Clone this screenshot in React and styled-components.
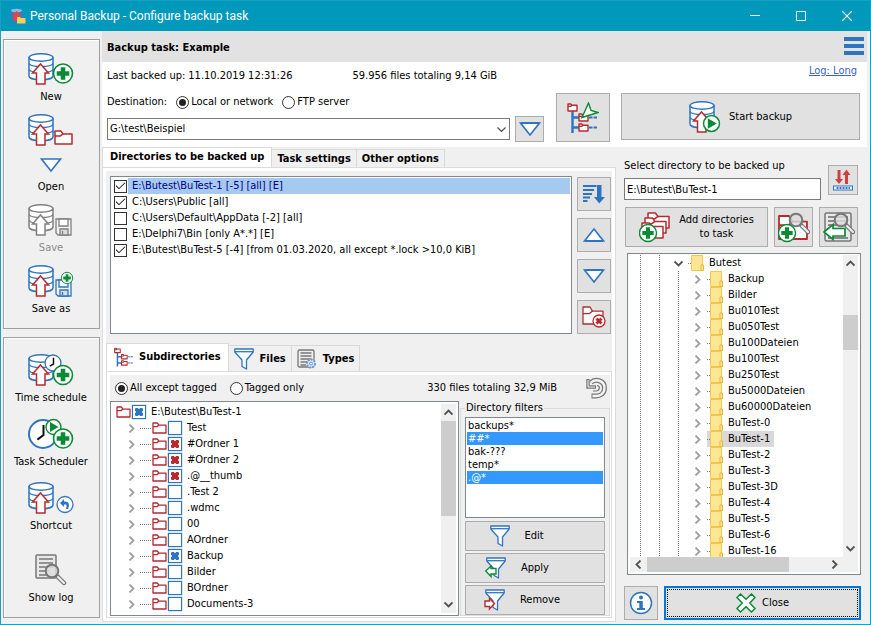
import React from "react";
import styled, { createGlobalStyle } from "styled-components";

const BLUE = "#2e74c0";
const RED = "#b52b2f";
const GREEN = "#0b8a35";
const GREY = "#808080";

const GlobalStyle = createGlobalStyle`
  * {
    box-sizing: border-box;
  }
  body {
    margin: 0;
    background: #f0f0f0;
    color: #000;
    font-family: "DejaVu Sans Condensed", "Noto Sans", sans-serif;
    font-size: 11px;
    line-height: 14px;
  }
  button, input, select {
    font: inherit;
    color: inherit;
    margin: 0;
  }
  svg {
    display: block;
    flex: none;
  }
`;

const Window = styled.div`
  display: flex;
  flex-direction: column;
  height: 100vh;
  min-height: 560px;
  border: 1px solid #18a0bf;
  background: #f0f0f0;
  white-space: nowrap;
`;

const TitleBar = styled.header`
  display: flex;
  align-items: center;
  flex: none;
  height: 30px;
  padding-left: 9px;
  background: #0099bc;
  color: #fff;
  font-family: Roboto, "Open Sans", sans-serif;

  h1 {
    flex: 1;
    margin: 0 0 0 4px;
    font-size: 12px;
    font-weight: 400;
  }
`;

const WindowButton = styled.button`
  display: grid;
  place-items: center;
  width: 46px;
  height: 30px;
  padding: 0;
  border: 0;
  background: none;
`;

const Body = styled.div`
  display: flex;
  flex: 1;
  min-height: 0;
`;

const Sidebar = styled.nav`
  display: flex;
  flex-direction: column;
  gap: 8px;
  flex: none;
  width: 101px;
  padding: 8px 2px 7px;
`;

const ToolPanel = styled.div`
  display: flex;
  flex-direction: column;
  flex: ${(p) => (p.$grow ? 1 : "none")};
  gap: ${(p) => (p.$grow ? 13 : 10)}px;
  padding: ${(p) => (p.$grow ? 16 : 13)}px 0 12px;
  border: 1px solid #a0a0a0;
  box-shadow: inset 1px 1px 0 #fff;
`;

const Tool = styled.button`
  display: flex;
  flex-direction: column;
  align-items: center;
  gap: 5px;
  padding: 0 1px 0 0;
  border: 0;
  background: none;

  &:disabled {
    color: #8a8a8a;
  }
  &:nth-child(4) {
    margin-top: ${(p) => (p.$apart ? 8 : 0)}px;
  }
`;

const Main = styled.main`
  display: flex;
  flex-direction: column;
  flex: 1;
  min-width: 0;
  padding: 0 3px 2px 0;
`;

const TaskHeader = styled.div`
  display: flex;
  align-items: center;
  justify-content: space-between;
  flex: none;
  height: 31px;
  padding: 3px 3px 0 5px;
  background: #e2e2e2;

  h2 {
    margin: 0;
    font-size: 11px;
  }
`;

const MenuButton = styled.button`
  display: flex;
  flex-direction: column;
  gap: 3px;
  width: 20px;
  padding: 0 0 4px;
  border: 0;
  background: none;

  span {
    height: 4px;
    background: ${BLUE};
  }
`;

const TaskInfo = styled.section`
  flex: none;
  padding: 0 7px 5px 5px;
  background: #fff;
`;

const StatusLine = styled.div`
  display: flex;
  align-items: center;
  height: 28px;

  time {
    margin-left: 3px;
  }
  output {
    flex: 1;
    margin-left: 60px;
  }
  a {
    align-self: flex-start;
    margin: 2px 3px 0 0;
    color: #3b62d9;
  }
`;

const ActionLine = styled.div`
  display: flex;
  align-items: flex-start;
  padding-top: 3px;
`;

const Destination = styled.div`
  flex: 1;
  min-width: 0;
`;

const RadioLine = styled.div`
  display: flex;
  align-items: center;
  gap: ${(p) => p.$gap}px;
  height: ${(p) => p.$height}px;
  padding-left: ${(p) => p.$indent || 0}px;
  margin-bottom: ${(p) => p.$below || 0}px;

  label {
    display: flex;
    align-items: center;
    gap: 2px;
  }
  output {
    flex: 1;
    text-align: right;
    padding-right: 14px;
  }
`;

const Radio = styled.input.attrs({ type: "radio" })`
  appearance: none;
  display: grid;
  place-content: center;
  width: 13px;
  height: 13px;
  border: 1px solid #333;
  border-radius: 50%;
  background: #fff;

  &:checked::before {
    content: "";
    width: 7px;
    height: 7px;
    border-radius: 50%;
    background: #222;
  }
`;

const ComboLine = styled.div`
  display: flex;
  align-items: center;
  gap: 5px;
`;

const Combo = styled.div`
  display: grid;
  flex: 1;
  align-items: center;

  select, svg {
    grid-area: 1 / 1;
  }
  select {
    appearance: none;
    width: 100%;
    height: 22px;
    padding: 0 2px;
    border: 1px solid #7a7a7a;
    border-radius: 0;
    background: #fff;
  }
  svg {
    justify-self: end;
    margin-right: 4px;
    pointer-events: none;
  }
`;

const PushButton = styled.button`
  display: flex;
  align-items: center;
  justify-content: center;
  gap: ${(p) => p.$gap || 8}px;
  flex: none;
  width: ${(p) => (p.$width ? p.$width + "px" : "auto")};
  height: ${(p) => p.$height}px;
  margin-left: ${(p) => p.$left || 0}px;
  padding: 0 ${(p) => p.$right || 0}px 0 0;
  border: 1px solid #adadad;
  background: #e1e1e1;
`;

const CloseButton = styled.button`
  display: flex;
  align-items: center;
  justify-content: center;
  gap: 6px;
  flex: 1;
  padding: 0;
  border: 2px solid #0078d7;
  outline: 1px dotted #000;
  outline-offset: -4px;
  background: #e1e1e1;
`;

const Work = styled.div`
  display: grid;
  grid-template-columns: minmax(0, 1fr) 251px;
  flex: 1;
  min-height: 0;
`;

const Tabbed = styled.div`
  display: flex;
  flex-direction: column;
  flex: 1;
  min-height: 0;
`;

const TabStrip = styled.div`
  display: flex;
  align-items: flex-end;
  flex: none;
  height: ${(p) => p.$height}px;
`;

const Tab = styled.button`
  display: flex;
  align-items: center;
  gap: ${(p) => (p.$on ? 5 : 6)}px;
  height: ${(p) => (p.$on ? "100%" : "calc(100% - 2px)")};
  padding: 0 ${(p) => (p.$on ? 7 : 5)}px ${(p) => (p.$on ? 1 : 0)}px;
  border: 1px solid #d9d9d9;
  border-width: ${(p) => (p.$on ? "1px 1px 0 1px" : "1px 1px 0 0")};
  background: ${(p) => (p.$on ? "#fff" : "#f0f0f0")};
  font-weight: 700;
`;

const TabPage = styled.div`
  display: flex;
  flex-direction: column;
  flex: 1;
  min-height: 0;
  border: 1px solid #dcdcdc;
  padding: ${(p) => (p.$inner ? "3px 1px 2px 3px" : "3px")};
  background: linear-gradient(#f0f0f0, #f0f0f0) content-box, #fff;
`;

const DirectoryRow = styled.div`
  display: flex;
  gap: 5px;
  flex: none;
  padding: 5px 1px 9px 4px;
`;

const DirectoryList = styled.ul`
  flex: 1;
  margin: 0;
  padding: 1px;
  border: 1px solid #828790;
  background: #fff;
  list-style: none;

  label {
    display: flex;
    align-items: center;
    gap: 1px;
    height: 16px;
    padding-left: 2px;
  }
  span {
    flex: 1;
    line-height: 16px;
    padding-left: 4px;
  }
  .selected span {
    background: #a6c9ef;
    color: #00008b;
  }
`;

const Tick = styled.input.attrs({ type: "checkbox" })`
  appearance: none;
  display: grid;
  place-content: center;
  flex: none;
  width: 13px;
  height: 13px;
  border: 1px solid #333;
  background: #fff;

  &:checked::before {
    content: "";
    width: 10px;
    height: 8px;
    background: #222;
    clip-path: polygon(0 50%, 8% 40%, 35% 74%, 92% 5%, 100% 12%, 35% 92%);
  }
`;

const SideButtons = styled.div`
  display: flex;
  flex-direction: column;
  gap: 7px;
  padding-top: 1px;
`;

const FilterLayout = styled.div`
  display: grid;
  grid-template-columns: minmax(0, 1fr) 150px;
  gap: 1px;
  flex: 1;
  min-height: 0;
`;

const TreeBox = styled.div`
  display: grid;
  grid-template-columns: minmax(0, 1fr) 15px;
  grid-template-rows: minmax(0, 1fr) ${(p) => (p.$both ? "15px" : "")};
  flex: 1;
  min-height: 0;
  padding: ${(p) => (p.$both ? 1 : 2)}px 2px 2px;
  border: 1px solid #828790;
  background: #fff;
`;

const Tree = styled.ul`
  margin: 0;
  padding: 0 0 0 ${(p) => p.$indent}px;
  overflow: hidden;
  list-style: none;
`;

const TreeRow = styled.li`
  display: flex;
  align-items: center;
  height: 16px;
  padding-left: ${(p) => (p.$child ? 11 : 0)}px;

  label {
    display: flex;
    align-items: center;
    gap: 5px;
  }
`;

const Guide = styled.i`
  flex: none;
  width: 19px;
  height: 16px;
  background: ${(p) =>
    p.$line
      ? "repeating-linear-gradient(#777 0 1px, transparent 1px 2px) 9px 0 / 1px 100% no-repeat"
      : "none"};

  svg {
    margin: 4px auto 0;
  }
`;

const Dots = styled.i`
  flex: none;
  width: ${(p) => p.$width}px;
  height: 1px;
  margin-left: ${(p) => p.$left || 0}px;
  background: repeating-linear-gradient(90deg, #777 0 1px, transparent 1px 2px);
`;

const Node = styled.span`
  display: flex;
  align-items: center;
  height: 16px;
  padding-right: 4px;
  background: ${(p) => (p.$on ? "#d9d9d9" : "none")};

  svg {
    margin-right: 4px;
  }
`;

const CrossBox = styled.input.attrs({ type: "checkbox" })`
  appearance: none;
  display: grid;
  place-content: center;
  flex: none;
  width: 14px;
  height: 14px;
  margin-left: 1px;
  border: 1px solid ${BLUE};
  box-shadow: 0 0 1px ${BLUE};
  background: #fff;

  &:checked::before {
    content: "";
    width: 8px;
    height: 8px;
    background: ${(p) => p.$color || BLUE};
    clip-path: polygon(10% 0, 35% 0, 50% 15%, 65% 0, 90% 0, 100% 10%, 100% 35%, 85% 50%, 100% 65%, 100% 90%, 90% 100%, 65% 100%, 50% 85%, 35% 100%, 10% 100%, 0 90%, 0 65%, 15% 50%, 0 35%, 0 10%);
  }
`;

const ScrollBar = styled.div`
  display: flex;
  flex-direction: ${(p) => (p.$across ? "row" : "column")};
  align-items: center;
  background: #f0f0f0;
`;

const ScrollButton = styled.button`
  display: grid;
  place-items: center;
  flex: none;
  width: 17px;
  height: 17px;
  padding: 0;
  border: 0;
  background: none;
`;

const ResetButton = styled(ScrollButton)`
  width: 26px;
  height: 24px;
`;

const Space = styled.div`
  flex: ${(p) => p.$part};
`;

const Thumb = styled.div`
  flex: ${(p) => p.$part};
  align-self: stretch;
  background: #cdcdcd;
`;

const Filters = styled.fieldset`
  display: flex;
  flex-direction: column;
  gap: 2px;
  min-width: 0;
  margin: 0;
  padding: 2px 4px 0;
  border: 1px solid #dcdcdc;

  legend {
    padding: 0 1px;
  }
`;

const FilterList = styled.ul`
  height: 101px;
  margin: 0 0 1px;
  padding: 1px;
  border: 1px solid #828790;
  background: #fff;
  list-style: none;
`;

const FilterItem = styled.li`
  padding-left: 1px;
  line-height: 13px;
  background: ${(p) => (p["aria-selected"] ? "#3399ff" : "none")};
  color: ${(p) => (p["aria-selected"] ? "#fff" : "#000")};
`;

const Selector = styled.aside`
  display: flex;
  flex-direction: column;
  min-height: 0;
  padding: 12px 6px 2px 8px;
`;

const PathLine = styled.div`
  display: flex;
  align-items: center;
  gap: 7px;
  padding-right: 3px;

  label {
    flex: 1;
    min-width: 0;
  }
  input {
    display: block;
    width: 100%;
    height: 22px;
    margin-top: 5px;
    padding: 0 2px;
    border: 1px solid #7a7a7a;
    background: #fff;
  }
`;

const AddLine = styled.div`
  display: flex;
  gap: 6px;
  padding: 7px 3px 6px 1px;

  button:first-child {
    flex: 1;
  }
`;

const TreeHolder = styled.div`
  display: flex;
  flex: 1;
  min-height: 0;
  padding-left: 3px;
`;

const Footer = styled.div`
  display: flex;
  gap: 6px;
  padding-top: 11px;
`;

/* ---- drawings ---- */

const Database = ({ color = BLUE, arrow = RED }) => (
  <g strokeWidth="1.5">
    <path d="M1 4.5V23C1 28 25 28 25 23V4.5" fill="#fff" stroke={color} />
    <path d="M1 10.5C3 14.5 23 14.5 25 10.5M1 16.5C3 20.5 23 20.5 25 16.5" fill="none" stroke={color} />
    <ellipse cx="13" cy="4.5" rx="12" ry="3.7" fill="#fff" stroke={color} />
    <path d="M12.5 11L20.5 20H17V31H8.5V20H4.5Z" fill="#fff" stroke={arrow} />
  </g>
);

const Plus = ({ x, y, r = 10 }) => (
  <g transform={`translate(${x} ${y}) scale(${r / 10})`}>
    <circle r="9.5" fill="#fff" stroke={GREEN} strokeWidth="1.6" />
    <path d="M-2.3 -6.3H2.3V-2.3H6.3V2.3H2.3V6.3H-2.3V2.3H-6.3V-2.3H-2.3Z" fill={GREEN} />
  </g>
);

const Play = ({ x, y, r = 8 }) => (
  <g transform={`translate(${x} ${y}) scale(${r / 8})`}>
    <circle r="7.5" fill="#fff" stroke={GREEN} strokeWidth="1.4" />
    <path d="M-3.5 -5L5 0L-3.5 5Z" fill={GREEN} />
  </g>
);

const Clock = ({ x, y, r }) => (
  <g transform={`translate(${x} ${y})`}>
    <circle r={r} fill="#fff" stroke={BLUE} strokeWidth={r > 10 ? 2 : 1.3} />
    <path d={`M0.5 ${-r * 0.65}V1L${-r * 0.4} ${r * 0.4}`} fill="none" stroke="#111" strokeWidth={r > 10 ? 2 : 1.5} />
  </g>
);

const Floppy = ({ x, y, color = BLUE }) => (
  <g transform={`translate(${x} ${y})`} stroke={color} strokeWidth="1.3">
    <path d="M1 1H16V17H3L1 15Z" fill="#f2f2f2" />
    <path d="M4 1H13V8H4Z" fill="#fff" />
    <path d="M5 11H13V17H5Z" fill="#ddd" />
    <path d="M7.5 13V16" />
  </g>
);

const Magnifier = ({ x, y }) => (
  <g transform={`translate(${x} ${y})`}>
    <path d="M5 5L12 12" stroke="#777" strokeWidth="4.5" strokeLinecap="round" />
    <path d="M6 6L12 12" stroke="#f2f2f2" strokeWidth="2" strokeLinecap="round" />
    <circle r="6.3" fill="#ddd" fillOpacity="0.8" stroke="#777" strokeWidth="2" />
  </g>
);

const Folder = ({ x = 0, y = 0, w = 14, h = 11, stroke = 1.3 }) => (
  <g transform={`translate(${x} ${y})`} fill="#fff" stroke={RED} strokeWidth={stroke} strokeLinejoin="round">
    <path d={`M1 ${h}V1H${w * 0.38}L${w * 0.5} ${h * 0.28}H${w}V${h}Z`} />
    <path d={`M1 ${h * 0.42}H${w * 0.36}L${w * 0.5} ${h * 0.28}`} fill="none" />
  </g>
);

const ToolIcon = ({ children, width = 46 }) => (
  <svg width={width} height="32" viewBox={`0 0 ${width} 32`}>{children}</svg>
);

const Triangle = ({ up, w = 22, h = 16 }) => (
  <svg width={w} height={h} viewBox="0 0 22 16">
    <path d={up ? "M11 2L20.5 14H1.5Z" : "M1.5 2H20.5L11 14Z"} fill="#fff" stroke={BLUE} strokeWidth="1.6" />
    <path d={up ? "M2 14H20" : "M2 2H20"} stroke={BLUE} strokeWidth="2" />
  </svg>
);

const Chevron = ({ to, color = "#505050", weight = 1.8 }) => {
  const paths = {
    down: "M.5 2.5L4.5 6.5L8.5 2.5",
    up: "M.5 6.5L4.5 2.5L8.5 6.5",
    left: "M6.5 .5L2.5 4.5L6.5 8.5",
    right: "M2.5 .5L6.5 4.5L2.5 8.5",
  };
  return (
    <svg width="9" height="9" viewBox="0 0 9 9">
      <path d={paths[to]} fill="none" stroke={color} strokeWidth={weight} />
    </svg>
  );
};

const AppIcon = () => (
  <svg width="16" height="16" viewBox="0 0 16 16">
    <path d="M1 2.5C1 .5 12 .5 12 2.5V12C12 14 1 14 1 12Z" fill="#3f78bd" />
    <ellipse cx="6.5" cy="2.6" rx="5.5" ry="1.8" fill="#8db9e6" />
    <path d="M6.5 3L12 8.5H9.5V13H3.5V8.5H1Z" fill="#e0454b" />
    <path d="M7 9H10L11 10H15.5V15.5H7Z" fill="#f5cf5b" />
  </svg>
);

const TreeIcon = ({ size = 32, wand }) => (
  <svg width={size} height={size} viewBox="0 0 32 32">
    <path d="M5.5 8V31M5.5 15.5H12M5.5 25.5H12" fill="none" stroke={BLUE} strokeWidth="2.4" />
    <path d="M22 15.5H31M22 25.5H31" fill="none" stroke={BLUE} strokeWidth="1.8" strokeDasharray="3.5 1" />
    <Folder x={0} y={1} w={10} h={8} stroke={wand ? 1.4 : 1.7} />
    <Folder x={11} y={11} w={10} h={8} stroke={wand ? 1.4 : 1.7} />
    <Folder x={11} y={21} w={10} h={8} stroke={wand ? 1.4 : 1.7} />
    {wand && <path d="M21.5 1L24 8.5L31 10.5L15 15.5Z" fill="#fff" stroke={GREEN} strokeWidth="1.4" />}
  </svg>
);

const Funnel = ({ mark }) => (
  <svg width={mark ? 22 : 20} height="22" viewBox={mark ? "-1 0 22 22" : "0 0 20 22"}>
    <g fill="#fff" stroke={BLUE} strokeWidth="1.3" strokeLinejoin="round">
      <path d="M.8 1H19.2V4L12.5 12V21L8 18.5V12L.8 4Z" />
      <path d="M1 3.7H19" />
    </g>
    {mark === "apply" && <path d="M-.3 14L5 9V11.5H10V17H5V19.5Z" fill="#fff" stroke={GREEN} strokeWidth="1.4" />}
    {mark === "remove" && <path d="M9.5 14.5L4.5 9.5V12H0V17.5H4.5V20Z" fill="#fff" stroke={RED} strokeWidth="1.4" />}
  </svg>
);

const TypesIcon = () => (
  <svg width="20" height="20" viewBox="0 0 20 20">
    <rect x="1" y="1" width="16" height="17" rx="1.5" fill="#eee" stroke="#777" strokeWidth="1.3" />
    <path d="M3.5 4H14.5M3.5 7H14.5M3.5 10H14.5M3.5 13H11M3.5 16H9" stroke="#777" strokeWidth="1.5" />
    <circle cx="14" cy="14.5" r="4" fill="#dceafa" stroke="#6b9bd1" strokeWidth="2" strokeDasharray="2 1" />
    <circle cx="14" cy="14.5" r="1.5" fill="#fff" stroke="#6b9bd1" />
  </svg>
);

const SortIcon = () => (
  <svg width="22" height="20" viewBox="0 0 22 20">
    <path d="M0 2H13.5M0 6H11M0 10H9M0 13.5H7M0 17H4.5" stroke={BLUE} strokeWidth="1.8" />
    <path d="M14 1H18.5V13H22L16.3 19.5L11 13H14Z" fill={BLUE} />
  </svg>
);

const RemoveFolderIcon = () => (
  <svg width="24" height="22" viewBox="0 0 24 22">
    <Folder w={21} h={18} />
    <circle cx="17" cy="15" r="6" fill="#fff" stroke={RED} strokeWidth="1.3" />
    <path d="M14.5 12.5L19.5 17.5M19.5 12.5L14.5 17.5" stroke={RED} strokeWidth="3" />
  </svg>
);

const UndoIcon = () => (
  <svg width="22" height="22" viewBox="0 0 22 22">
    <g fill="none">
      <path d="M5 5.5C9 1.5 18.5 3 18.5 11C18.5 16.5 14 19 10 19H5.5" stroke="#777" strokeWidth="5" />
      <path d="M2 2V10H10" stroke="#777" strokeWidth="3.4" />
      <path d="M5 5.5C9 1.5 18.5 3 18.5 11C18.5 16.5 14 19 10 19H6.5" stroke="#f4f4f4" strokeWidth="2.4" />
      <path d="M2 3V10H9" stroke="#f4f4f4" strokeWidth="1" />
      <path d="M7 14H10C14 14 14.5 8.5 11 8.5" stroke="#777" strokeWidth="1.2" />
    </g>
  </svg>
);

const RefreshIcon = () => (
  <svg width="20" height="22" viewBox="0 0 20 22">
    <path d="M4.5 1H7.5V10H10L6 15L2 10H4.5ZM12 15V6H9.5L13.5 .5L17.5 6H15V15Z" fill="#cf4040" />
    <path d="M.5 17H19.5V21H.5Z" fill="#fff" stroke={BLUE} strokeWidth="1.2" />
    <path d="M3.5 19H17" stroke={BLUE} strokeWidth="2" strokeDasharray="2 1" />
  </svg>
);

const FolderStackIcon = () => (
  <svg width="32" height="32" viewBox="0 0 32 32">
    <Folder x={8} y={1} w={22} h={16} stroke={1.5} />
    <Folder x={5} y={6} w={22} h={16} stroke={1.5} />
    <Folder x={2} y={11} w={22} h={16} stroke={1.5} />
    <Plus x={9} y={22} r={9} />
  </svg>
);

const FindFolderIcon = () => (
  <svg width="32" height="32" viewBox="0 0 32 32">
    <Folder x={0} y={4} w={29} h={24} stroke={1.8} />
    <Magnifier x={18} y={9} />
    <Plus x={9} y={22} r={9} />
  </svg>
);

const FindTextIcon = () => (
  <svg width="32" height="32" viewBox="0 0 32 32">
    <rect x="2" y="2" width="26" height="28" rx="1.5" fill="#e8e8e8" stroke="#777" strokeWidth="1.5" />
    <path d="M5 6H25M5 10H25M5 14H25M5 27H25" stroke="#888" strokeWidth="2" />
    <Magnifier x={18} y={9} />
    <path d="M1 21L10 13.5V17.5H22V25H10V28.5Z" fill="#fff" stroke={GREEN} strokeWidth="1.7" />
  </svg>
);

const YellowFolder = () => (
  <svg width="14" height="16" viewBox="0 0 14 16">
    <path d="M.5 .5H11.5V15.5H.5Z" fill="#ffe694" stroke="#ecc94f" />
    <path d="M10 10H12.5V15.5H10Z" fill="#ffe694" stroke="#e3b93c" />
  </svg>
);

const InfoIcon = () => (
  <svg width="24" height="24" viewBox="0 0 24 24">
    <circle cx="12" cy="12" r="10.5" fill="#fff" stroke={BLUE} strokeWidth="1.5" />
    <circle cx="12" cy="6.5" r="2" fill={BLUE} />
    <path d="M8 10H13.8V17H16V19H8V17H10.3V12H8Z" fill={BLUE} />
  </svg>
);

const CloseIcon = () => (
  <svg width="20" height="20" viewBox="0 0 20 20">
    <path
      d="M4.5 1L10 6.2L15.5 1L19 4.5L13.8 10L19 15.5L15.5 19L10 13.8L4.5 19L1 15.5L6.2 10L1 4.5Z"
      fill="#fff"
      stroke={GREEN}
      strokeWidth="1.5"
    />
  </svg>
);

const SmallFolder = () => (
  <svg width="15" height="14" viewBox="0 0 15 14">
    <Folder y={1} w={14} h={11} />
  </svg>
);

/* ---- data ---- */

const directories = [
  { text: "E:\\Butest\\BuTest-1 [-5] [all] [E]", on: true, selected: true },
  { text: "C:\\Users\\Public [all]", on: true },
  { text: "C:\\Users\\Default\\AppData [-2] [all]" },
  { text: "E:\\Delphi7\\Bin [only A*.*] [E]" },
  { text: "E:\\Butest\\BuTest-5 [-4] [from 01.03.2020, all except *.lock >10,0 KiB]", on: true },
];

const subdirectories = [
  { name: "Test" },
  { name: "#Ordner 1", mark: RED },
  { name: "#Ordner 2", mark: RED },
  { name: ".@__thumb", mark: RED },
  { name: ".Test 2" },
  { name: ".wdmc" },
  { name: "00" },
  { name: "AOrdner" },
  { name: "Backup", mark: BLUE },
  { name: "Bilder" },
  { name: "BOrdner" },
  { name: "Documents-3" },
];

const filters = [
  { text: "backups*" },
  { text: "##*", on: true },
  { text: "bak-???" },
  { text: "temp*" },
  { text: ".@*", on: true },
];

const folders = [
  "Backup", "Bilder", "Bu010Test", "Bu050Test", "Bu100Dateien", "Bu100Test",
  "Bu250Test", "Bu5000Dateien", "Bu60000Dateien", "BuTest-0", "BuTest-1",
  "BuTest-2", "BuTest-3", "BuTest-3D", "BuTest-4", "BuTest-5", "BuTest-6", "BuTest-16",
];

/* ---- parts ---- */

function Tools() {
  return (
    <Sidebar>
      <ToolPanel>
        <Tool>
          <ToolIcon><Database /><Plus x={35} y={20.5} /></ToolIcon>
          New
        </Tool>
        <Tool>
          <ToolIcon><Database /><Folder x={26} y={16} w={18} h={14} stroke={1.5} /></ToolIcon>
          <svg width="22" height="24" viewBox="0 0 22 24">
            <path d="M1.5 8H20.5L11 20Z" fill="#fff" stroke={BLUE} strokeWidth="1.6" />
          </svg>
          Open
        </Tool>
        <Tool disabled>
          <ToolIcon><Database color={GREY} arrow={GREY} /><Floppy x={27} y={14} color={GREY} /></ToolIcon>
          Save
        </Tool>
        <Tool>
          <ToolIcon><Database /><Floppy x={27} y={14} /><Plus x={39} y={13} r={6} /></ToolIcon>
          Save as
        </Tool>
      </ToolPanel>
      <ToolPanel $grow>
        <Tool $apart>
          <ToolIcon><Database /><Clock x={25} y={9} r={8} /><Plus x={35} y={21} /></ToolIcon>
          Time schedule
        </Tool>
        <Tool $apart>
          <ToolIcon><Clock x={15} y={16} r={14} /><Play x={25.5} y={9} /><Plus x={35} y={20.5} /></ToolIcon>
          Task Scheduler
        </Tool>
        <Tool $apart>
          <ToolIcon>
            <Database />
            <circle cx="37" cy="22.5" r="8" fill="#fff" stroke={BLUE} strokeWidth="1.3" />
            <path d="M32 21L36 17V19.5C41 19 42 22 40 27H38C39 23 39 22 36 22.5V25Z" fill={BLUE} />
          </ToolIcon>
          Shortcut
        </Tool>
        <Tool $apart>
          <ToolIcon width={32}>
            <rect x="1" y="1" width="20" height="23" rx="1" fill="#e8e8e8" stroke="#777" strokeWidth="1.5" />
            <path d="M4 5H18M4 9H18M4 13H18M4 17H14M4 21H12" stroke="#777" strokeWidth="1.6" />
            <Magnifier x={17} y={17} />
          </ToolIcon>
          Show log
        </Tool>
      </ToolPanel>
    </Sidebar>
  );
}

function SubdirectoryTree() {
  return (
    <TreeBox>
      <Tree $indent={3}>
        <TreeRow>
          <SmallFolder />
          <label>
            <CrossBox defaultChecked />
            E:\Butest\BuTest-1
          </label>
        </TreeRow>
        {subdirectories.map((dir) => (
          <TreeRow key={dir.name} $child>
            <Chevron to="right" color="#a0a0a0" />
            <Dots $width={12} $left={4} />
            <SmallFolder />
            <label>
              <CrossBox $color={dir.mark} defaultChecked={Boolean(dir.mark)} />
              {dir.name}
            </label>
          </TreeRow>
        ))}
      </Tree>
      <ScrollBar>
        <ScrollButton aria-label="Scroll up"><Chevron to="up" /></ScrollButton>
        <Thumb $part={95} />
        <Space $part={80} />
        <ScrollButton aria-label="Scroll down"><Chevron to="down" /></ScrollButton>
      </ScrollBar>
    </TreeBox>
  );
}

function FolderTree() {
  return (
    <TreeBox $both>
      <Tree $indent={1}>
        <TreeRow>
          <Guide $line />
          <Guide $line />
          <Guide><Chevron to="down" /></Guide>
          <Node><Dots $width={3} /><YellowFolder />Butest</Node>
        </TreeRow>
        {folders.map((name) => (
          <TreeRow key={name}>
            <Guide $line />
            <Guide $line />
            <Guide $line />
            <Guide><Chevron to="right" color="#a0a0a0" /></Guide>
            <Node $on={name === "BuTest-1"}><Dots $width={3} /><YellowFolder />{name}</Node>
          </TreeRow>
        ))}
      </Tree>
      <ScrollBar>
        <ScrollButton aria-label="Scroll up"><Chevron to="up" /></ScrollButton>
        <Space $part={43} />
        <Thumb $part={35} />
        <Space $part={190} />
        <ScrollButton aria-label="Scroll down"><Chevron to="down" /></ScrollButton>
      </ScrollBar>
      <ScrollBar $across>
        <ScrollButton aria-label="Scroll left"><Chevron to="left" /></ScrollButton>
        <Thumb $part={143} />
        <Space $part={37} />
        <ScrollButton aria-label="Scroll right"><Chevron to="right" /></ScrollButton>
      </ScrollBar>
      <ScrollBar />
    </TreeBox>
  );
}

export default function App() {
  return (
    <Window>
      <GlobalStyle />
      <TitleBar>
        <AppIcon />
        <h1>Personal Backup - Configure backup task</h1>
        <WindowButton aria-label="Minimize">
          <svg width="10" height="10"><path d="M0 4.5H10" stroke="#fff" /></svg>
        </WindowButton>
        <WindowButton aria-label="Maximize">
          <svg width="10" height="10"><path d="M.5 .5H9.5V9.5H.5Z" fill="none" stroke="#fff" /></svg>
        </WindowButton>
        <WindowButton aria-label="Close window">
          <svg width="10" height="10"><path d="M0 0L10 10M10 0L0 10" stroke="#fff" strokeWidth="1.2" /></svg>
        </WindowButton>
      </TitleBar>
      <Body>
        <Tools />
        <Main>
          <TaskHeader>
            <h2>Backup task: Example</h2>
            <MenuButton aria-label="Menu"><span /><span /><span /></MenuButton>
          </TaskHeader>
          <TaskInfo>
            <StatusLine>
              Last backed up:
              <time>11.10.2019 12:31:26</time>
              <output>59.956 files totaling 9,14 GiB</output>
              <a href="#log">Log: Long</a>
            </StatusLine>
            <ActionLine>
              <Destination>
                <RadioLine $gap={9} $height={18} $below={5}>
                  Destination:
                  <label><Radio name="target" defaultChecked />Local or network</label>
                  <label><Radio name="target" />FTP server</label>
                </RadioLine>
                <ComboLine>
                  <Combo>
                    <select aria-label="Destination path" defaultValue="G:\test\Beispiel">
                      <option>G:\test\Beispiel</option>
                    </select>
                    <Chevron to="down" weight={1.2} />
                  </Combo>
                  <PushButton $width={29} $height={26} aria-label="Select destination"><Triangle /></PushButton>
                </ComboLine>
              </Destination>
              <PushButton $width={54} $height={49} $left={12} aria-label="Directory wizard">
                <TreeIcon wand />
              </PushButton>
              <PushButton $width={239} $height={47} $left={11}>
                <ToolIcon width={32}><Database /><Play x={22.5} y={22.5} r={8.5} /></ToolIcon>
                Start backup
              </PushButton>
            </ActionLine>
          </TaskInfo>
          <Work>
            <Tabbed>
              <TabStrip $height={20}>
                <Tab $on>Directories to be backed up</Tab>
                <Tab>Task settings</Tab>
                <Tab>Other options</Tab>
              </TabStrip>
              <TabPage>
                <DirectoryRow>
                  <DirectoryList>
                    {directories.map((dir) => (
                      <li key={dir.text} className={dir.selected ? "selected" : undefined}>
                        <label><Tick defaultChecked={dir.on} /><span>{dir.text}</span></label>
                      </li>
                    ))}
                  </DirectoryList>
                  <SideButtons>
                    <PushButton $width={34} $height={34} aria-label="Sort"><SortIcon /></PushButton>
                    <PushButton $width={34} $height={34} aria-label="Move up"><Triangle up /></PushButton>
                    <PushButton $width={34} $height={34} aria-label="Move down"><Triangle /></PushButton>
                    <PushButton $width={34} $height={34} aria-label="Remove directory"><RemoveFolderIcon /></PushButton>
                  </SideButtons>
                </DirectoryRow>
                <Tabbed>
                  <TabStrip $height={28}>
                    <Tab $on><TreeIcon size={20} />Subdirectories</Tab>
                    <Tab><Funnel />Files</Tab>
                    <Tab><TypesIcon />Types</Tab>
                  </TabStrip>
                  <TabPage $inner>
                    <RadioLine $gap={13} $height={26} $indent={5}>
                      <label><Radio name="tagging" defaultChecked />All except tagged</label>
                      <label><Radio name="tagging" />Tagged only</label>
                      <output>330 files totaling 32,9 MiB</output>
                      <ResetButton aria-label="Reset"><UndoIcon /></ResetButton>
                    </RadioLine>
                    <FilterLayout>
                      <SubdirectoryTree />
                      <Filters>
                        <legend>Directory filters</legend>
                        <FilterList role="listbox" aria-label="Directory filters">
                          {filters.map((f) => (
                            <FilterItem key={f.text} role="option" aria-selected={Boolean(f.on)}>{f.text}</FilterItem>
                          ))}
                        </FilterList>
                        <PushButton $height={30} $gap={14} $right={36}><Funnel />Edit</PushButton>
                        <PushButton $height={30} $gap={14} $right={36}><Funnel mark="apply" />Apply</PushButton>
                        <PushButton $height={30} $gap={14} $right={26}><Funnel mark="remove" />Remove</PushButton>
                      </Filters>
                    </FilterLayout>
                  </TabPage>
                </Tabbed>
              </TabPage>
            </Tabbed>
            <Selector>
              <PathLine>
                <label>
                  Select directory to be backed up
                  <input type="text" defaultValue="E:\Butest\BuTest-1" />
                </label>
                <PushButton $width={30} $height={30} aria-label="Refresh"><RefreshIcon /></PushButton>
              </PathLine>
              <AddLine>
                <PushButton $height={40}>
                  <FolderStackIcon />
                  <span>Add directories<br />to task</span>
                </PushButton>
                <PushButton $width={39} $height={40} aria-label="Find and add directory"><FindFolderIcon /></PushButton>
                <PushButton $width={39} $height={40} aria-label="Search in list"><FindTextIcon /></PushButton>
              </AddLine>
              <TreeHolder>
                <FolderTree />
              </TreeHolder>
              <Footer>
                <PushButton $width={34} $height={34} aria-label="Info"><InfoIcon /></PushButton>
                <CloseButton><CloseIcon />Close</CloseButton>
              </Footer>
            </Selector>
          </Work>
        </Main>
      </Body>
    </Window>
  );
}
